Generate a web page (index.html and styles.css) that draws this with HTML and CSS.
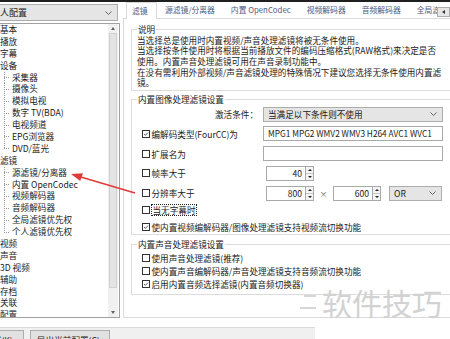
FILE: index.html
```html
<!DOCTYPE html>
<html lang="zh-CN">
<head>
<meta charset="utf-8">
<title>配置</title>
<link rel="stylesheet" href="styles.css">
</head>
<body>
<div class="topline"></div>
<div class="main">
  <aside class="left">
    <div class="combo profile"><span class="combo-text">个人配置</span><svg class="chev" viewBox="0 0 7 4"><polyline points="0.5,0.5 3.5,3.5 6.5,0.5"/></svg></div>
    <div class="tree">
      <ul class="nodes">
        <li class="node">基本</li>
        <li class="node">播放</li>
        <li class="node">字幕</li>
        <li class="node">设备</li>
        <li class="child"><span class="conn"></span>采集器</li>
        <li class="child"><span class="conn"></span>摄像头</li>
        <li class="child"><span class="conn"></span>模拟电视</li>
        <li class="child"><span class="conn"></span>数字 TV(BDA)</li>
        <li class="child"><span class="conn"></span>电视频道</li>
        <li class="child"><span class="conn"></span>EPG浏览器</li>
        <li class="child last"><span class="conn"></span>DVD/蓝光</li>
        <li class="node">滤镜</li>
        <li class="child"><span class="conn"></span>源滤镜/分离器</li>
        <li class="child"><span class="conn"></span>内置 OpenCodec</li>
        <li class="child"><span class="conn"></span>视频解码器</li>
        <li class="child"><span class="conn"></span>音频解码器</li>
        <li class="child"><span class="conn"></span>全局滤镜优先权</li>
        <li class="child last"><span class="conn"></span>个人滤镜优先权</li>
        <li class="node">视频</li>
        <li class="node">声音</li>
        <li class="node">3D 视频</li>
        <li class="node">辅助</li>
        <li class="node">存档</li>
        <li class="node">关联</li>
        <li class="node">配置</li>
      </ul>
      <div class="vscroll">
        <span class="sb-btn"><i class="tri-up"></i></span>
        <span class="sb-thumb"></span>
        <span class="sb-track"></span>
        <span class="sb-btn"><i class="tri-down"></i></span>
      </div>
    </div>
  </aside>
  <section class="right">
    <nav class="tabs">
      <div class="tab-list">
        <span class="tab active">滤镜</span>
        <span class="tab">源滤镜/分离器</span>
        <span class="tab">内置 OpenCodec</span>
        <span class="tab">视频解码器</span>
        <span class="tab">音频解码器</span>
        <span class="tab">全局滤镜优先权</span>
      </div>
      <div class="tab-spin"><span class="spin-cell"><i class="tri-left"></i></span><span class="spin-cell"><i class="tri-right"></i></span></div>
    </nav>
    <div class="page">
      <fieldset class="group info">
        <legend>说明</legend>
        <p>当选择总是使用时内置视频/声音处理滤镜将被无条件使用。</p>
        <p>当选择按条件使用时将根据当前播放文件的编码压缩格式(RAW格式)来决定是否</p>
        <p>使用。内置声音处理滤镜可用在声音录制功能中。</p>
        <p>在没有需利用外部视频/声音滤镜处理的特殊情况下建议您选择无条件使用内置滤</p>
        <p>镜。</p>
      </fieldset>
      <fieldset class="group video">
        <legend>内置图像处理滤镜设置</legend>
        <div class="row first">
          <span class="lbl lbl-right">激活条件：</span>
          <div class="combo cond"><span class="combo-text">当满足以下条件则不使用</span><svg class="chev" viewBox="0 0 7 4"><polyline points="0.5,0.5 3.5,3.5 6.5,0.5"/></svg></div>
        </div>
        <div class="row">
          <span class="lbl chk"><span class="box"><svg viewBox="0 0 8 8"><polyline points="1.4,4 3.2,5.8 6.6,2.2"/></svg></span>编解码类型(FourCC)为</span>
          <div class="field">MPG1 MPG2 WMV2 WMV3 H264 AVC1 WVC1</div>
        </div>
        <div class="row">
          <span class="lbl chk"><span class="box"></span>扩展名为</span>
          <div class="field"></div>
        </div>
        <div class="row">
          <span class="lbl chk"><span class="box"></span>帧率大于</span>
          <div class="spin first-spin"><span class="spin-val">40</span><span class="spin-btns"><span><i class="tri-up"></i></span><span><i class="tri-down"></i></span></span></div>
        </div>
        <div class="row">
          <span class="lbl chk"><span class="box"></span>分辨率大于</span>
          <div class="spin first-spin"><span class="spin-val">800</span><span class="spin-btns"><span><i class="tri-up"></i></span><span><i class="tri-down"></i></span></span></div>
          <span class="times">×</span>
          <div class="spin"><span class="spin-val">600</span><span class="spin-btns"><span><i class="tri-up"></i></span><span><i class="tri-down"></i></span></span></div>
          <div class="combo or"><span class="combo-text">OR</span><svg class="chev" viewBox="0 0 7 4"><polyline points="0.5,0.5 3.5,3.5 6.5,0.5"/></svg></div>
        </div>
        <div class="line sub">
          <span class="chk"><span class="box"></span><span class="focus">当无字幕时</span></span>
        </div>
        <div class="line last-line">
          <span class="chk"><span class="box"><svg viewBox="0 0 8 8"><polyline points="1.4,4 3.2,5.8 6.6,2.2"/></svg></span>使内置视频编解码器/图像处理滤镜支持视频流切换功能</span>
        </div>
      </fieldset>
      <fieldset class="group audio">
        <legend>内置声音处理滤镜设置</legend>
        <div class="aline"><span class="chk"><span class="box"></span>使用声音处理滤镜(推荐)</span></div>
        <div class="aline"><span class="chk"><span class="box"></span>使内置声音编解码器/声音处理滤镜支持音频流切换功能</span></div>
        <div class="aline"><span class="chk"><span class="box"><svg viewBox="0 0 8 8"><polyline points="1.4,4 3.2,5.8 6.6,2.2"/></svg></span>启用内置音频选择滤镜(内置音频切换器)</span></div>
      </fieldset>
    </div>
  </section>
</div>
<div class="gap"></div>
<div class="btnbar">
  <span class="btn btn-import">导入配置(K)...</span>
  <span class="btn btn-export">导出当前配置(C)...</span>
</div>

<div class="watermark">
  <span class="wm-logo"><i></i><i></i></span>
  <span class="wm-text">软件技巧</span>
</div>

<svg class="arrow" viewBox="0 0 450 339" width="450" height="339">
  <line x1="135" y1="193" x2="80" y2="176.8"/>
  <polygon points="71,174 83,173.2 80.2,181"/>
</svg>
</body>
</html>
```

FILE: styles.css
```css
* { box-sizing: border-box; }
html, body { margin: 0; padding: 0; }
body {
  width: 450px;
  height: 339px;
  overflow: hidden;
  position: relative;
  background: #ffffff;
  font-family: "Noto Sans CJK SC", "Noto Sans", sans-serif;
  font-size: 8.6px;
  color: #1b1b1b;
}

.topline { height: 2px; background: #1f1f1f; }

.main { display: flex; height: 316px; }

/* ---------- left column ---------- */
.left {
  flex: none;
  width: 134px;
  margin-left: -14px;
  display: flex;
  flex-direction: column;
}
.combo {
  display: flex;
  align-items: center;
  border: 1px solid #adadad;
  background: #e5e5e5;
  padding: 0 5px 0 4px;
  white-space: nowrap;
}
.combo-text { flex: 1; overflow: hidden; }
.chev { width: 7px; height: 4px; flex: none; }
.chev polyline { fill: none; stroke: #555; stroke-width: 0.9; }

.profile {
  height: 17px;
  margin-top: 2px;
  margin-right: 2px;
  font-size: 9px;
}

.tree {
  margin-top: 2px;
  flex: 1;
  border: 1px solid #a0a0a0;
  display: flex;
  overflow: hidden;
  background: #fff;
}
.nodes {
  flex: 1;
  list-style: none;
  margin: 0;
  padding: 0;
}
.nodes li {
  height: 11.9px;
  line-height: 11.9px;
  white-space: nowrap;
  display: flex;
}
.node { padding-left: 13px; }
.child { padding-left: 17px; }
.conn {
  flex: none;
  width: 8px;
  background:
    repeating-linear-gradient(to bottom, #9a9a9a 0 1px, transparent 1px 2px) 0 0 / 1px 100% no-repeat,
    repeating-linear-gradient(to right, #9a9a9a 0 1px, transparent 1px 2px) 0 50% / 6px 1px no-repeat;
}
.last .conn { background-size: 1px 50%, 6px 1px; }

.vscroll {
  flex: none;
  width: 10px;
  margin-right: 1px;
  background: #f0f0f0;
  display: flex;
  flex-direction: column;
  align-items: center;
}
.sb-btn {
  flex: none;
  height: 9px;
  width: 10px;
  display: flex;
  align-items: center;
  justify-content: center;
}
.sb-thumb {
  flex: none;
  width: 8px;
  height: 255px;
  background: #e4e4e4;
  border: 1px solid #d0d0d0;
}
.sb-track { flex: 1; }

.tri-up, .tri-down, .tri-left, .tri-right { display: block; width: 0; height: 0; }
.tri-up { border-left: 2.5px solid transparent; border-right: 2.5px solid transparent; border-bottom: 3px solid #606060; }
.tri-down { border-left: 2.5px solid transparent; border-right: 2.5px solid transparent; border-top: 3px solid #606060; }
.tri-left { border-top: 2.5px solid transparent; border-bottom: 2.5px solid transparent; border-right: 3px solid #333; }
.tri-right { border-top: 2.5px solid transparent; border-bottom: 2.5px solid transparent; border-left: 3px solid #333; }

/* ---------- right column ---------- */
.right {
  flex: none;
  width: 340px;
  margin-left: 3px;
  display: flex;
  flex-direction: column;
}
.tabs {
  flex: none;
  height: 17px;
  margin-bottom: -1px;
  display: flex;
  align-items: flex-end;
  position: relative;
  z-index: 1;
}
.tab-list {
  flex: 1;
  min-width: 0;
  height: 17px;
  display: flex;
  overflow: hidden;
}
.tab {
  flex: none;
  padding: 0 8px;
  font-size: 7.8px;
  line-height: 16px;
  color: #4b5b7f;
  white-space: nowrap;
}
.tab.active {
  margin-left: 3px;
  width: 31px;
  padding: 0 0 0 5px;
  background: #fff;
  border: 1px solid #d9d9d9;
  border-bottom: none;
  height: 17px;
  line-height: 15px;
}
.tab-spin {
  flex: none;
  display: flex;
  height: 10px;
  margin-bottom: 2px;
}
.spin-cell {
  width: 13px;
  height: 10px;
  border: 1px solid #adadad;
  background: #e6e6e6;
  display: flex;
  align-items: center;
  justify-content: center;
}

.page {
  flex: 1;
  border: 1px solid #d9d9d9;
  padding: 4.5px 0 0 7px;
  display: flex;
  flex-direction: column;
}

.group {
  margin: 0;
  min-width: 0;
  border: 1px solid #dcdcdc;
  padding: 0 0 0 5px;
}
.group legend {
  padding: 0 1px;
  line-height: 11px;
  font-size: 8.6px;
}

.info { padding-bottom: 1.5px; }
.info p {
  margin: 0;
  line-height: 10.7px;
  white-space: nowrap;
}

.video { margin-top: 3.5px; padding-bottom: 1px; }
.row {
  display: flex;
  align-items: center;
  height: 15px;
  margin-top: 4.8px;
  white-space: nowrap;
}
.row.first { margin-top: 1.5px; }
.lbl { flex: none; width: 126px; }
.lbl-right { text-align: right; padding-right: 5px; }
.chk { display: flex; align-items: center; padding-left: 5px; white-space: nowrap; }
.box {
  flex: none;
  width: 8px;
  height: 8px;
  border: 1px solid #333;
  background: #fff;
  margin-right: 1.5px;
  display: flex;
}
.box svg { width: 6px; height: 6px; }
.box polyline { fill: none; stroke: #222; stroke-width: 1; }

.cond { width: 180px; height: 15px; }
.field {
  width: 180px;
  height: 15px;
  border: 1px solid #a9a9a9;
  background: #fff;
  padding-left: 4px;
  line-height: 13px;
  font-size: 8.3px;
}

.spin { flex: none; display: flex; width: 48px; height: 15px; }
.first-spin { margin-left: 3px; }
.spin-val {
  flex: 1;
  border: 1px solid #a9a9a9;
  border-right: none;
  text-align: right;
  padding-right: 3px;
  line-height: 13px;
}
.spin-btns {
  flex: none;
  width: 9px;
  display: flex;
  flex-direction: column;
  border: 1px solid #a9a9a9;
}
.spin-btns span {
  flex: 1;
  display: flex;
  align-items: center;
  justify-content: center;
  background: #f4f4f4;
}
.spin-btns span + span { border-top: 1px solid #c8c8c8; }
.spin-btns .tri-up { border-left-width: 2px; border-right-width: 2px; border-bottom-width: 2.5px; border-bottom-color: #222; }
.spin-btns .tri-down { border-left-width: 2px; border-right-width: 2px; border-top-width: 2.5px; border-top-color: #222; }

.times { flex: none; width: 19px; text-align: center; color: #666; font-size: 8px; }
.or { flex: none; width: 53px; height: 15px; margin-left: 8px; }

.line { height: 12px; line-height: 12px; display: flex; align-items: center; }
.line.sub { margin-top: 2.8px; }
.line.last-line { margin-top: 5px; }
.focus { outline: 1px dotted #222; outline-offset: 0; padding: 0 1px; line-height: 10px; }

.audio { margin-top: 4.5px; padding-bottom: 3.3px; }
.aline { height: 13.4px; display: flex; align-items: center; }
.aline:first-of-type { margin-top: 1px; }

/* ---------- bottom ---------- */
.gap { height: 9px; }
.btnbar {
  width: 315px;
  height: 12px;
  border-top: 1px solid #dadada;
  background: #f0f0f0;
  display: flex;
  gap: 6px;
  padding-top: 2px;
  overflow: hidden;
}
.btn {
  flex: none;
  height: 20px;
  line-height: 18px;
  border: 1px solid #adadad;
  background: #e1e1e1;
  white-space: nowrap;
  padding-left: 6px;
  overflow: hidden;
}
.btn-import { width: 64px; margin-left: -40px; }
.btn-export { width: 80px; }

/* ---------- overlays ---------- */
.watermark {
  position: absolute;
  left: 300px;
  top: 284px;
  display: flex;
  align-items: center;
  gap: 6px;
  pointer-events: none;
}
.wm-logo {
  width: 16px;
  height: 20px;
  display: flex;
  flex-direction: column;
  justify-content: space-between;
  align-items: flex-end;
  padding: 3px 0;
}
.wm-logo i { display: block; height: 2px; background: #d6d6d6; }
.wm-logo i:first-child { width: 12px; }
.wm-logo i:last-child { width: 16px; }
.wm-text {
  font-size: 30px;
  line-height: 36px;
  color: #d2d2d2;
  white-space: nowrap;
}

.arrow {
  position: absolute;
  left: 0;
  top: 0;
  pointer-events: none;
}
.arrow line { stroke: #e23a3a; stroke-width: 1.6; }
.arrow polygon { fill: #e23a3a; }
```
